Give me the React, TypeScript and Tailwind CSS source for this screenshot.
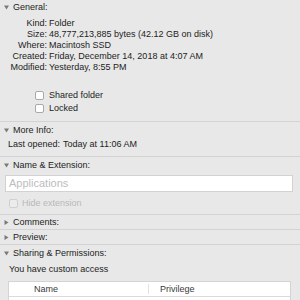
import React from "react";

const Down = () => (
  <svg width="5" height="5" viewBox="0 0 5 5" className="shrink-0">
    <polygon points="0,0.5 5,0.5 2.5,4.5" fill="#7a7a7a" />
  </svg>
);
const Right = () => (
  <svg width="5" height="5" viewBox="0 0 5 5" className="shrink-0">
    <polygon points="0.5,0 4.5,2.5 0.5,5" fill="#7a7a7a" />
  </svg>
);

const Header = ({ open, title, h }: { open: boolean; title: string; h: string }) => (
  <div className={`flex items-center pl-[4px] gap-[4px] ${h}`}>
    {open ? <Down /> : <Right />}
    <span>{title}</span>
  </div>
);

const Sep = () => <div className="h-px bg-[#d3d3d3]" />;

const Row = ({ label, value }: { label: string; value: string }) => (
  <div className="flex items-center h-[11px] whitespace-nowrap">
    <span className="w-[47px] text-right">{label}</span>
    <span className="ml-[2px]">{value}</span>
  </div>
);

const Check = ({ disabled }: { disabled?: boolean }) => (
  <div
    className={`w-[9px] h-[9px] rounded-[2px] border ${
      disabled ? "border-[#d0d0d0] bg-[#ececec]" : "border-[#a9a9a9] bg-white"
    }`}
  />
);

export default function App() {
  return (
    <div
      className="w-[300px] h-[300px] overflow-hidden bg-[#e8e8e8] text-[#232323] text-[9px] leading-none"
      style={{ fontFamily: '"Liberation Sans", Arial, sans-serif' }}
    >
      <Header open title="General:" h="h-[14px]" />
      <div className="h-[4px]" />
      <Row label="Kind:" value="Folder" />
      <Row label="Size:" value="48,777,213,885 bytes (42.12 GB on disk)" />
      <Row label="Where:" value="Macintosh SSD" />
      <Row label="Created:" value="Friday, December 14, 2018 at 4:07 AM" />
      <Row label="Modified:" value="Yesterday, 8:55 PM" />
      <div className="h-[16px]" />
      <div className="flex items-center h-[13px] pl-[35px] gap-[5px]">
        <Check />
        <span>Shared folder</span>
      </div>
      <div className="flex items-center h-[13px] pl-[35px] gap-[5px]">
        <Check />
        <span>Locked</span>
      </div>
      <div className="h-[6px]" />
      <Sep />
      <Header open title="More Info:" h="h-[16px]" />
      <div className="flex items-center h-[12px] pl-[8px]">
        <span>Last opened:</span>
        <span className="ml-[3px]">Today at 11:06 AM</span>
      </div>
      <div className="h-[6px]" />
      <Sep />
      <Header open title="Name & Extension:" h="h-[16px]" />
      <div className="h-[2px]" />
      <div className="mx-[5px] w-[288px] h-[17px] bg-white border border-[#d2d2d2] flex items-center pl-[3px] text-[#bdbdbd] text-[11px]">
        Applications
      </div>
      <div className="flex items-center h-[22px] pl-[9px] gap-[4px] text-[#b8b8b8]">
        <Check disabled />
        <span>Hide extension</span>
      </div>
      <Sep />
      <Header open={false} title="Comments:" h="h-[14px]" />
      <Sep />
      <Header open={false} title="Preview:" h="h-[14px]" />
      <Sep />
      <Header open title="Sharing & Permissions:" h="h-[16px]" />
      <div className="flex items-center h-[16px] pl-[9px]">You have custom access</div>
      <div className="h-[4px]" />
      <div className="ml-[8px] w-[283px] bg-white border border-[#d4d4d4] border-b-0">
        <div className="flex h-[15px] border-b border-[#dadada] text-[#3a3a3a]">
          <div className="w-[140px] flex items-center pl-[25px] border-r border-[#e2e2e2] my-[2px]">Name</div>
          <div className="flex-1 flex items-center pl-[11px]">Privilege</div>
        </div>
        <div className="h-[20px]" />
      </div>
    </div>
  );
}
